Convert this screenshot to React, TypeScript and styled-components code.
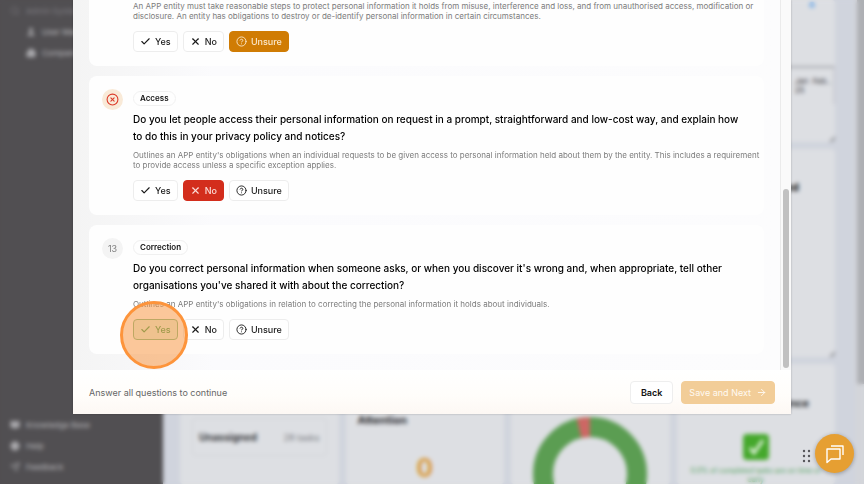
import React from "react";
import styled, { createGlobalStyle, css } from "styled-components";
import {
  ArrowRight,
  BookOpen,
  Building2,
  Check,
  CircleHelp,
  CircleX,
  Search,
  Send,
  User,
  X,
} from "lucide-react";

const GlobalStyle = createGlobalStyle`
  *, *::before, *::after { box-sizing: border-box; }
  html, body { margin: 0; height: 100%; overflow: hidden; }
  body { font-family: Inter, "Liberation Sans", sans-serif; color: #111; background: #d0d4dd; }
  button { font: inherit; margin: 0; cursor: pointer; }
  h2, h3, p { margin: 0; }
`;

/* ---------- dashboard behind the dialog ---------- */

const Shell = styled.div`
  display: flex;
  height: 100vh;
`;

const Sidebar = styled.nav`
  flex: none;
  width: 163px;
  padding: 0 10px 7px;
  background: #514f52;
  display: flex;
  flex-direction: column;
  justify-content: space-between;
`;

const NavGroup = styled.div`
  display: flex;
  flex-direction: column;
`;

const NavLink = styled.a<{ $nested?: boolean; $faint?: boolean }>`
  display: flex;
  align-items: center;
  gap: 6px;
  height: 21px;
  padding-left: ${(p) => (p.$nested ? "16px" : "0")};
  font-size: 8px;
  font-weight: 500;
  text-decoration: none;
  color: ${(p) => (p.$faint ? "#77757a" : "#aaa9ad")};
`;

const Main = styled.main`
  flex: 1;
  min-width: 0;
  display: grid;
  grid-template-columns: repeat(4, 1fr);
  grid-template-rows: 142px 208px 1fr;
  gap: 7px;
  padding: 0 20px 0 17px;
`;

const Widget = styled.section<{ $wide?: boolean }>`
  grid-column: ${(p) => (p.$wide ? "1 / -1" : "auto")};
  min-width: 0;
  min-height: 0;
  overflow: hidden;
  background: ${(p) =>
    p.$wide
      ? "linear-gradient(135deg, transparent 50%, #a3a5aa 50%) right bottom / 7px 7px no-repeat #dddfe3"
      : "#dddfe3"};
  border-radius: 4px;
  display: flex;
  flex-direction: column;
`;

const TimelineHead = styled.div`
  height: 66px;
  padding: 2px 20px;
  display: flex;
  justify-content: flex-end;
`;

const Dot = styled.span`
  width: 6px;
  height: 6px;
  border-radius: 50%;
  background: #8db8e6;
`;

const Timeline = styled.div`
  padding: 9px 2px;
  border-top: 2px solid #a9abb0;
  border-right: 2px solid #cbcdd2;
  display: flex;
  justify-content: flex-end;
  gap: 4px;
  font-size: 8px;
  line-height: 9px;
  color: #3f4145;
`;

const WideTitle = styled.h3`
  padding: 31px 36px;
  text-align: right;
  font-size: 11px;
  line-height: 14px;
`;

const WidgetTitle = styled.h3<{ $end?: boolean }>`
  font-size: 11px;
  line-height: 14px;
  padding: ${(p) => (p.$end ? "32px 26px 0 0" : "49px 12px 0")};
  text-align: ${(p) => (p.$end ? "right" : "left")};
  color: #2a2b2e;
`;

const Assignee = styled.div`
  margin: 54px 12px 0 12px;
  height: 38px;
  padding: 0 6px;
  border: 1px solid #d2d4d9;
  border-radius: 4px;
  display: flex;
  align-items: center;
  justify-content: space-between;
  font-size: 9px;
  color: #77797e;
  strong { font-size: 10px; font-weight: 700; color: #3a3b3e; }
`;

const Count = styled.div`
  margin-top: 26px;
  text-align: center;
  font-size: 25px;
  line-height: 30px;
  font-weight: 700;
  color: #d99a3c;
`;

const Donut = styled.svg`
  width: 116px;
  height: 116px;
  flex: none;
  margin: 52px auto 0;
`;

const TickTile = styled.svg`
  width: 28px;
  height: 28px;
  flex: none;
  margin: 23px auto 5px;
`;

const Caption = styled.p`
  padding: 0 10px;
  text-align: center;
  font-size: 7px;
  line-height: 9px;
  color: #4f9f5c;
`;

const PageScroll = styled.div`
  flex: none;
  width: 9px;
  background: linear-gradient(#aeb0b4, #aeb0b4) right top / 7px 384px no-repeat #d3d5da;
`;

/* ---------- dialog ---------- */

const Overlay = styled.div`
  position: fixed;
  inset: 0;
  padding: 0 73px 70px;
  display: flex;
  backdrop-filter: blur(2px);
`;

const Dialog = styled.section`
  flex: 1;
  min-width: 0;
  display: flex;
  flex-direction: column;
  background: #fff;
  box-shadow: 0 0 2px rgba(0, 0, 0, 0.25);
`;

const Body = styled.div`
  flex: 1;
  min-height: 0;
  overflow: hidden;
  display: flex;
`;

const Questions = styled.div`
  flex: 1;
  min-width: 0;
  padding: 0 16px 16px;
  display: flex;
  flex-direction: column;
  justify-content: flex-end;
  gap: 10px;
  background: linear-gradient(90deg, #f4f4f4 0, #f7f7f8 70px, #fbfbfd 140px, #fcfcfd 100%);
`;

const ScrollTrack = styled.div`
  flex: none;
  width: 11px;
  padding: 2px;
  border-left: 1px solid #ebebeb;
  background: #fafafa;
  display: flex;
  align-items: flex-end;
  justify-content: center;
`;

const ScrollThumb = styled.div`
  width: 6px;
  height: 49%;
  border-radius: 3px;
  background: #c1c1c1;
`;

const Card = styled.article`
  flex: none;
  display: flex;
  gap: 10px;
  padding: 13px 4px 14px 13px;
  border-radius: 8px;
  background: #fefefe;
`;

const Status = styled.div<{ $error?: boolean }>`
  flex: none;
  width: 21px;
  height: 21px;
  border-radius: 50%;
  display: flex;
  align-items: center;
  justify-content: center;
  font-size: 9px;
  color: ${(p) => (p.$error ? "#dc3b2a" : "#7d7d7d")};
  background: ${(p) => (p.$error ? "#f9ead8" : "#f4f4f4")};
`;

const StatusSpace = styled.div`
  flex: none;
  width: 21px;
`;

const Content = styled.div`
  flex: 1;
  min-width: 0;
  padding-top: 2px;
  display: flex;
  flex-direction: column;
  align-items: flex-start;
`;

const Tag = styled.span`
  height: 15px;
  padding: 0 6px;
  margin-bottom: 5px;
  border: 1px solid #f0f0f0;
  border-radius: 8px;
  font-size: 8px;
  line-height: 13px;
  font-weight: 600;
`;

const Title = styled.h2`
  margin-bottom: 5px;
  padding-right: 16px;
  font-size: 10px;
  line-height: 17px;
  font-weight: 500;
  color: #000;
`;

const Description = styled.p`
  margin-bottom: 10px;
  font-size: 8px;
  line-height: 10px;
  color: #7c7c7c;
`;

const Answers = styled.div`
  display: flex;
  gap: 5px;
`;

type Tone = "plain" | "no" | "unsure" | "yes";

const tones = {
  plain: css`color: #1a1a1a; background: #fff; border-color: #ededed;`,
  no: css`color: #fbdcd8; background: #d32d1c; border-color: #d32d1c;`,
  unsure: css`color: #fbe8cc; background: #d07c04; border-color: #d07c04;`,
  yes: css`color: #43a35a; background: #e6f4e6; border-color: #7fbf8c;`,
};

const Answer = styled.button<{ $tone: Tone }>`
  position: relative;
  height: 21px;
  padding: 0 6px;
  border: 1px solid;
  border-radius: 4px;
  display: flex;
  align-items: center;
  gap: 4px;
  font-size: 9px;
  font-weight: 500;
  line-height: 12px;
  ${(p) => tones[p.$tone]}
`;

const ClickRing = styled.span`
  position: absolute;
  left: 50%;
  top: 50%;
  width: 68px;
  height: 68px;
  margin: -29px 0 0 -35px;
  border: 3px solid #fd943b;
  border-radius: 50%;
  background: rgba(247, 147, 62, 0.52);
  pointer-events: none;
  z-index: 1;
`;

const Footer = styled.footer`
  flex: none;
  height: 44px;
  padding: 0 16px;
  display: flex;
  align-items: center;
  gap: 8px;
  background: linear-gradient(#fff, #fffdfa 60%, #fdf8f4);
`;

const Hint = styled.p`
  flex: 1;
  font-size: 9px;
  color: #666;
`;

const FooterButton = styled.button<{ $primary?: boolean }>`
  height: 23px;
  padding: 0 ${(p) => (p.$primary ? "7px" : "10px")};
  border: 1px solid ${(p) => (p.$primary ? "#f2cd98" : "#eee")};
  border-radius: 4px;
  display: flex;
  align-items: center;
  gap: 5px;
  font-size: 9px;
  font-weight: ${(p) => (p.$primary ? 400 : 600)};
  color: ${(p) => (p.$primary ? "#fffaf2" : "#111")};
  background: ${(p) => (p.$primary ? "#f2cd98" : "#fff")};
`;

/* ---------- floating chat launcher ---------- */

const Launcher = styled.div`
  position: fixed;
  right: 10px;
  bottom: 11px;
  display: flex;
  align-items: center;
  gap: 4px;
`;

const Grip = styled.svg`
  width: 9px;
  height: 14px;
  margin-top: 4px;
  fill: #55565a;
`;

const ChatButton = styled.button`
  width: 39px;
  height: 39px;
  padding: 0;
  border: 0;
  border-radius: 50%;
  background: #e69f32;
  box-shadow: 0 1px 4px rgba(0, 0, 0, 0.3);
  display: flex;
  align-items: center;
  justify-content: center;
`;

type Choice = "Yes" | "No" | "Unsure";

const choices: { label: Choice; Icon: typeof Check; tone: Tone }[] = [
  { label: "Yes", Icon: Check, tone: "yes" },
  { label: "No", Icon: X, tone: "no" },
  { label: "Unsure", Icon: CircleHelp, tone: "unsure" },
];

interface Question {
  id: number;
  tag?: string;
  title?: string;
  description: string;
  answer: Choice;
  status?: React.ReactNode;
  clicked?: boolean;
}

const questions: Question[] = [
  {
    id: 11,
    description:
      "An APP entity must take reasonable steps to protect personal information it holds from misuse, interference and loss, and from unauthorised access, modification or disclosure. An entity has obligations to destroy or de-identify personal information in certain circumstances.",
    answer: "Unsure",
  },
  {
    id: 12,
    tag: "Access",
    title:
      "Do you let people access their personal information on request in a prompt, straightforward and low-cost way, and explain how to do this in your privacy policy and notices?",
    description:
      "Outlines an APP entity's obligations when an individual requests to be given access to personal information held about them by the entity. This includes a requirement to provide access unless a specific exception applies.",
    answer: "No",
    status: (
      <Status $error>
        <CircleX size={13} />
      </Status>
    ),
  },
  {
    id: 13,
    tag: "Correction",
    title:
      "Do you correct personal information when someone asks, or when you discover it's wrong and, when appropriate, tell other organisations you've shared it with about the correction?",
    description:
      "Outlines an APP entity's obligations in relation to correcting the personal information it holds about individuals.",
    answer: "Yes",
    status: <Status>13</Status>,
    clicked: true,
  },
];

function QuestionCard({ question }: { question: Question }) {
  return (
    <Card>
      {question.status ?? <StatusSpace />}
      <Content>
        {question.tag && <Tag>{question.tag}</Tag>}
        {question.title && <Title>{question.title}</Title>}
        <Description>{question.description}</Description>
        <Answers>
          {choices.map(({ label, Icon, tone }) => {
            const selected = label === question.answer;
            return (
              <Answer key={label} type="button" aria-pressed={selected} $tone={selected ? tone : "plain"}>
                <Icon size={11} strokeWidth={label === "Unsure" ? 2 : 2.5} />
                {label}
                {selected && question.clicked && <ClickRing />}
              </Answer>
            );
          })}
        </Answers>
      </Content>
    </Card>
  );
}

export default function App() {
  return (
    <>
      <GlobalStyle />
      <Shell>
        <Sidebar>
          <NavGroup>
            <NavLink href="#" $faint><Search size={10} />Admin System</NavLink>
            <NavLink href="#" $nested><User size={10} fill="currentColor" />User Management</NavLink>
            <NavLink href="#" $nested><Building2 size={10} fill="currentColor" />Companies</NavLink>
          </NavGroup>
          <NavGroup>
            <NavLink href="#"><BookOpen size={10} fill="currentColor" />Knowledge Base</NavLink>
            <NavLink href="#"><CircleHelp size={10} fill="currentColor" />Help</NavLink>
            <NavLink href="#"><Send size={10} />Feedback</NavLink>
          </NavGroup>
        </Sidebar>
        <Main>
          <Widget $wide>
            <TimelineHead><Dot /></TimelineHead>
            <Timeline><span>Jan<br />25</span><span>Feb..</span></Timeline>
          </Widget>
          <Widget $wide><WideTitle>Completed</WideTitle></Widget>
          <Widget>
            <Assignee><strong>Unassigned</strong>28 tasks</Assignee>
          </Widget>
          <Widget>
            <WidgetTitle>Attention</WidgetTitle>
            <Count>0</Count>
          </Widget>
          <Widget>
            <Donut viewBox="0 0 116 116">
              <circle cx="58" cy="58" r="47" fill="none" stroke="#5b9d52" strokeWidth="20" />
              <path d="M47 12.300 A47 47 0 0 1 58 11" fill="none" stroke="#cd6764" strokeWidth="20" />
            </Donut>
          </Widget>
          <Widget>
            <WidgetTitle $end>Compliance</WidgetTitle>
            <TickTile viewBox="0 0 28 28">
              <rect x="1" y="1" width="26" height="26" rx="4" fill="#45a82c" />
              <path d="M8 15 L12 20 L21 7" fill="none" stroke="#e4f3df" strokeWidth="3" />
            </TickTile>
            <Caption>0.0% of completed tasks are on time or early</Caption>
          </Widget>
        </Main>
        <PageScroll />
      </Shell>

      <Overlay>
        <Dialog role="dialog" aria-label="Privacy questions">
          <Body>
            <Questions>
              {questions.map((q) => <QuestionCard key={q.id} question={q} />)}
            </Questions>
            <ScrollTrack><ScrollThumb /></ScrollTrack>
          </Body>
          <Footer>
            <Hint>Answer all questions to continue</Hint>
            <FooterButton type="button">Back</FooterButton>
            <FooterButton type="button" $primary>Save and Next<ArrowRight size={11} /></FooterButton>
          </Footer>
        </Dialog>
      </Overlay>

      <Launcher>
        <Grip viewBox="0 0 9 14">
          {[2, 7, 12].map((y) => (
            <React.Fragment key={y}>
              <circle cx="2" cy={y} r="1.2" />
              <circle cx="7" cy={y} r="1.2" />
            </React.Fragment>
          ))}
        </Grip>
        <ChatButton type="button" aria-label="Open chat">
          <svg width="20" height="20" viewBox="0 0 20 20" fill="none" stroke="#fff" strokeWidth="1.4" strokeLinejoin="round">
            <path d="M2 5h13v10H6l-4 3.500z" />
            <path d="M6 2h12v9" />
          </svg>
        </ChatButton>
      </Launcher>
    </>
  );
}
